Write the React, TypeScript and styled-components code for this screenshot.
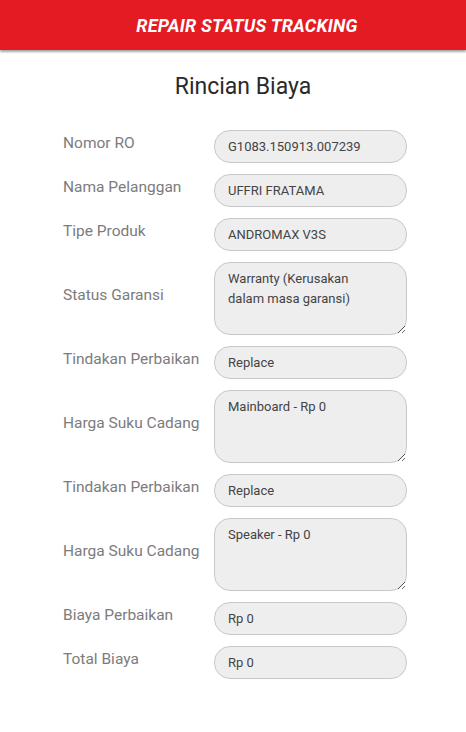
import React from 'react';
import styled, { createGlobalStyle } from 'styled-components';

const Global = createGlobalStyle`
  body {
    margin: 0;
    background: #fff;
    font-family: Roboto, "Liberation Sans", sans-serif;
  }
`;

const Header = styled.div`
  height: 50px;
  background: #e41b23;
  box-shadow: 0 2px 2px rgba(0, 0, 0, 0.35);
  display: flex;
  align-items: center;
  justify-content: center;
  padding-left: 28px;
`;

const HeaderTitle = styled.div`
  color: #fff;
  font-weight: bold;
  font-style: italic;
  font-size: 18px;
  letter-spacing: 0.2px;
`;

const Title = styled.h1`
  margin: 23px 0 30px;
  text-align: center;
  font-weight: normal;
  font-size: 23px;
  color: #2a2a2a;
  padding-left: 20px;
`;

const Form = styled.div`
  display: grid;
  grid-template-columns: 151px 193px;
  row-gap: 11px;
  padding-left: 63px;
`;

const Label = styled.div`
  display: flex;
  align-items: center;
  padding-bottom: 7px;
  font-size: 15.5px;
  color: #7c7c7c;
`;

const Field = styled.input`
  box-sizing: border-box;
  width: 193px;
  height: 33px;
  border: 1px solid #c8c8c8;
  border-radius: 16px;
  background: #eeeeee;
  padding: 0 13px;
  font-family: Roboto, "Liberation Sans", sans-serif;
  font-size: 13px;
  color: #444;
  outline: none;
`;

const Area = styled.textarea`
  box-sizing: border-box;
  width: 193px;
  height: 73px;
  border: 1px solid #c8c8c8;
  border-radius: 16px;
  background: #eeeeee;
  padding: 6px 40px 6px 13px;
  font-family: Roboto, "Liberation Sans", sans-serif;
  font-size: 13px;
  line-height: 20px;
  color: #444;
  outline: none;
  display: block;
`;

const rows: { label: string; value: string; area?: boolean }[] = [
  { label: 'Nomor RO', value: 'G1083.150913.007239' },
  { label: 'Nama Pelanggan', value: 'UFFRI FRATAMA' },
  { label: 'Tipe Produk', value: 'ANDROMAX V3S' },
  { label: 'Status Garansi', value: 'Warranty (Kerusakan dalam masa garansi)', area: true },
  { label: 'Tindakan Perbaikan', value: 'Replace' },
  { label: 'Harga Suku Cadang', value: 'Mainboard - Rp 0', area: true },
  { label: 'Tindakan Perbaikan', value: 'Replace' },
  { label: 'Harga Suku Cadang', value: 'Speaker - Rp 0', area: true },
  { label: 'Biaya Perbaikan', value: 'Rp 0' },
  { label: 'Total Biaya', value: 'Rp 0' },
];

export default () => {
  return (
    <>
      <Global />
      <Header>
        <HeaderTitle>REPAIR STATUS TRACKING</HeaderTitle>
      </Header>
      <Title>Rincian Biaya</Title>
      <Form>
        {rows.map((r, i) => (
          <React.Fragment key={i}>
            <Label>{r.label}</Label>
            {r.area ? <Area readOnly value={r.value} /> : <Field readOnly value={r.value} />}
          </React.Fragment>
        ))}
      </Form>
    </>
  );
};
